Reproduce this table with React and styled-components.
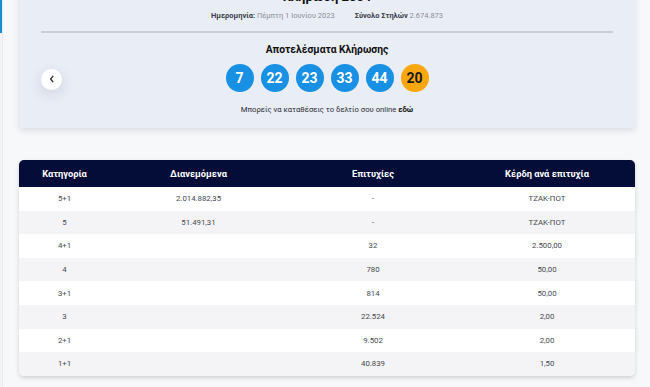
import React from 'react';
import styled, { createGlobalStyle } from 'styled-components';

const GlobalStyle = createGlobalStyle`
  html, body {
    margin: 0;
    padding: 0;
    background: #f7f8fa;
    font-family: Roboto, "Noto Sans", sans-serif;
    overflow: hidden;
  }
`;

const balls = [
  { n: 7 },
  { n: 22 },
  { n: 23 },
  { n: 33 },
  { n: 44 },
  { n: 20, joker: true },
];

const rows = [
  ['5+1', '2.014.882,35', '-', 'ΤΖΑΚ-ΠΟΤ'],
  ['5', '51.491,31', '-', 'ΤΖΑΚ-ΠΟΤ'],
  ['4+1', '', '32', '2.500,00'],
  ['4', '', '780', '50,00'],
  ['3+1', '', '814', '50,00'],
  ['3', '', '22.524', '2,00'],
  ['2+1', '', '9.502', '2,00'],
  ['1+1', '', '40.839', '1,50'],
];

const App = () => {
  return (
    <Page>
      <GlobalStyle />
      <Rail>
        <RailMark />
      </Rail>
      <Main>
        <DrawCard>
          <DrawTitle>Κλήρωση 2064</DrawTitle>
          <InfoLine>
            <span><b>Ημερομηνία:</b> Πέμπτη 1 Ιουνίου 2023</span>
            <span><b>Σύνολο Στηλών</b> 2.674.873</span>
          </InfoLine>
          <Divider />
          <Results>
            <NavButton aria-label="previous">
              <svg width="6" height="8" viewBox="0 0 6 8">
                <path d="M4.2 1 L1.6 4 L4.2 7" fill="none" stroke="#333" strokeWidth="1.3" />
              </svg>
            </NavButton>
            <ResultsBody>
              <ResultsTitle>Αποτελέσματα Κλήρωσης</ResultsTitle>
              <Balls>
                {balls.map((b) => (
                  <Ball key={b.n} $joker={b.joker}>{b.n}</Ball>
                ))}
              </Balls>
              <Note>Μπορείς να καταθέσεις το δελτίο σου online <b>εδώ</b></Note>
            </ResultsBody>
            <NavSpacer />
          </Results>
        </DrawCard>

        <Table>
          <HeadRow>
            <span>Κατηγορία</span>
            <span>Διανεμόμενα</span>
            <span>Επιτυχίες</span>
            <span>Κέρδη ανά επιτυχία</span>
          </HeadRow>
          {rows.map((r, i) => (
            <Row key={r[0]} $odd={i % 2 === 1}>
              {r.map((c, j) => <span key={j}>{c}</span>)}
            </Row>
          ))}
        </Table>
      </Main>
    </Page>
  );
};

const Page = styled.div`
  display: flex;
  height: 387px;
`;

const Rail = styled.div`
  width: 2px;
  border-right: 1px solid #e8e9ed;
  background: #f3f4f7;
`;

const RailMark = styled.div`
  width: 2px;
  height: 33px;
  background: #1b8fce;
`;

const Main = styled.div`
  flex: 1;
  padding: 0 15px 0 16px;
`;

const DrawCard = styled.div`
  margin-top: -22px;
  padding: 11px 22px 13px;
  background: #e9edf6;
  border-radius: 4px;
  box-shadow: 0 3px 6px rgba(30, 40, 70, 0.12);
  color: #111;
`;

const DrawTitle = styled.div`
  font-size: 13px;
  line-height: 16px;
  font-weight: 700;
  text-align: center;
`;

const InfoLine = styled.div`
  margin-top: 5px;
  display: flex;
  justify-content: center;
  gap: 20px;
  font-size: 7.5px;
  line-height: 12px;
  color: #8a8e96;
  b {
    color: #3a3f4a;
    font-weight: 700;
  }
`;

const Divider = styled.div`
  margin-top: 9px;
  height: 2px;
  background: #c9cdd5;
`;

const Results = styled.div`
  display: flex;
  align-items: center;
  margin-top: 10px;
`;

const NavButton = styled.button`
  width: 21px;
  height: 21px;
  border: none;
  border-radius: 50%;
  background: #fff;
  box-shadow: 0 4px 14px rgba(40, 50, 80, 0.14);
  display: flex;
  align-items: center;
  justify-content: center;
  padding: 0;
`;

const NavSpacer = styled.div`
  width: 21px;
`;

const ResultsBody = styled.div`
  flex: 1;
  display: flex;
  flex-direction: column;
  align-items: center;
`;

const ResultsTitle = styled.div`
  font-size: 10.3px;
  line-height: 14px;
  font-weight: 700;
  color: #111;
`;

const Balls = styled.div`
  display: flex;
  gap: 7px;
  margin-top: 7px;
`;

const Ball = styled.div`
  width: 28px;
  height: 28px;
  border-radius: 50%;
  background: ${(p) => (p.$joker ? '#f8a70c' : '#1890e4')};
  color: ${(p) => (p.$joker ? '#1a1a1a' : '#fff')};
  font-size: 14px;
  font-weight: 700;
  display: flex;
  align-items: center;
  justify-content: center;
`;

const Note = styled.div`
  margin-top: 12px;
  font-size: 7.7px;
  line-height: 11px;
  color: #2a2d33;
  b {
    color: #111;
  }
`;

const Table = styled.div`
  margin-top: 32px;
  border-radius: 5px;
  overflow: hidden;
  background: #fff;
  box-shadow: 0 2px 4px rgba(0, 0, 0, 0.16);
`;

const grid = `
  display: grid;
  grid-template-columns: 91px 177px 172px 1fr;
  align-items: center;
  text-align: center;
`;

const HeadRow = styled.div`
  ${grid}
  height: 27px;
  background: #040c38;
  color: #fff;
  font-size: 9.3px;
  font-weight: 700;
`;

const Row = styled.div`
  ${grid}
  height: 23.6px;
  background: ${(p) => (p.$odd ? '#f4f4f6' : '#fff')};
  color: #45484f;
  font-size: 7.8px;
`;

export default App;
